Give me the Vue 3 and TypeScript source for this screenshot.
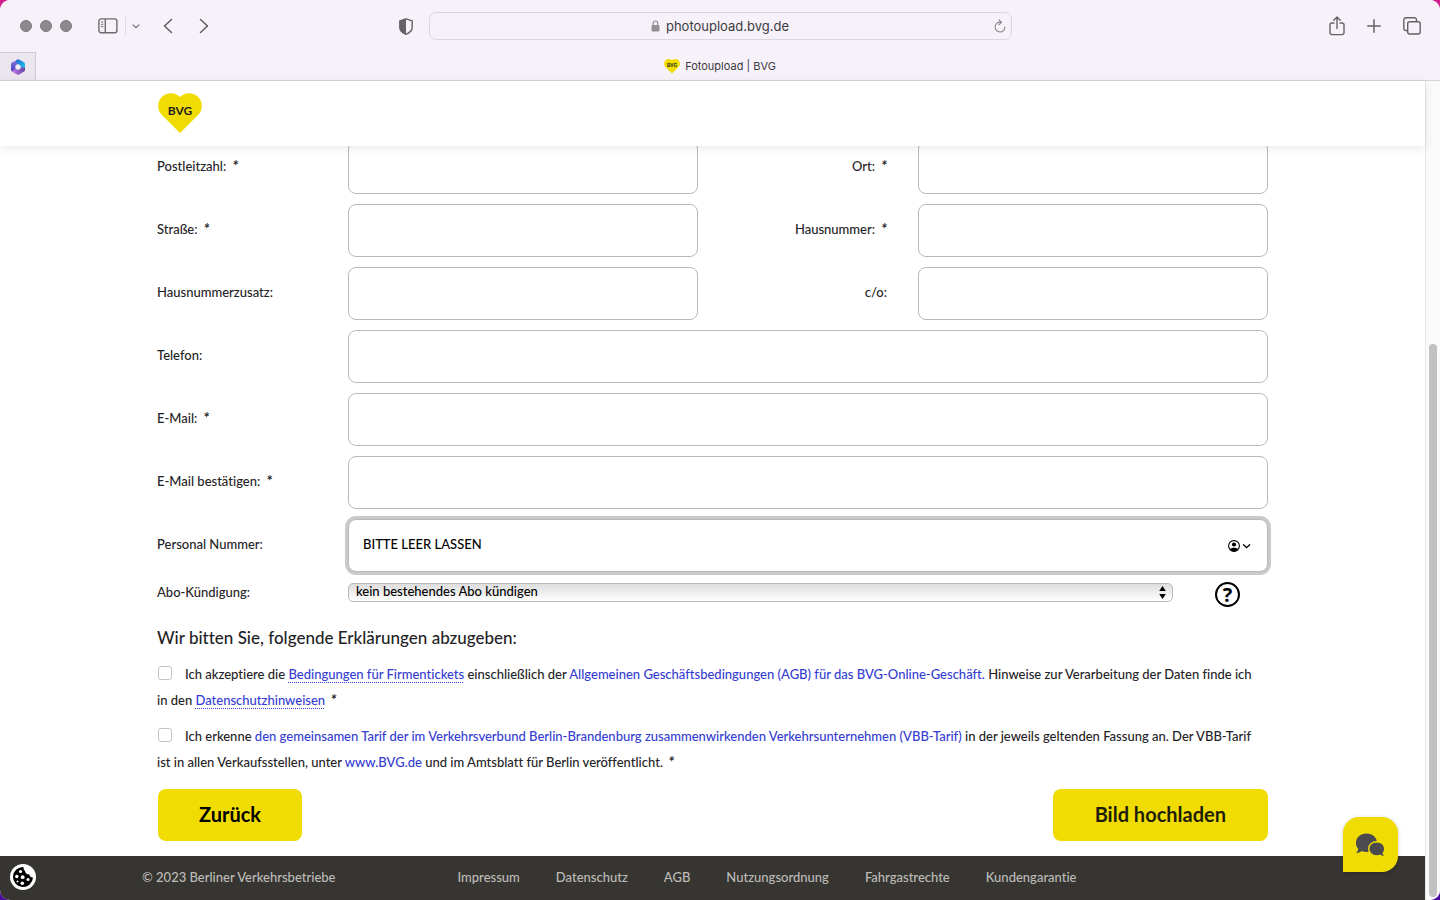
<script setup lang="ts">
import { ref } from 'vue'

interface Field {
  id: string
  label: string
  required: boolean
  wide: boolean
  side: boolean
}

const fields: Field[] = [
  { id: 'plz', label: 'Postleitzahl:', required: true, wide: false, side: false },
  { id: 'ort', label: 'Ort:', required: true, wide: false, side: true },
  { id: 'strasse', label: 'Straße:', required: true, wide: false, side: false },
  { id: 'hausnummer', label: 'Hausnummer:', required: true, wide: false, side: true },
  { id: 'zusatz', label: 'Hausnummerzusatz:', required: false, wide: false, side: false },
  { id: 'co', label: 'c/o:', required: false, wide: false, side: true },
  { id: 'telefon', label: 'Telefon:', required: false, wide: true, side: false },
  { id: 'email', label: 'E-Mail:', required: true, wide: true, side: false },
  { id: 'email2', label: 'E-Mail bestätigen:', required: true, wide: true, side: false },
]

const footerLinks: string[] = [
  'Impressum',
  'Datenschutz',
  'AGB',
  'Nutzungsordnung',
  'Fahrgastrechte',
  'Kundengarantie',
]

const personalNumber = ref('BITTE LEER LASSEN')
</script>

<template>
  <div class="window">
    <header class="chrome">
      <div class="toolbar">
        <div class="tools">
          <div class="lights"><i></i><i></i><i></i></div>
          <button class="tool sidebar" aria-label="Seitenleiste">
            <svg width="20" height="16" viewBox="0 0 20 16" fill="none" stroke="#6d696e" stroke-width="1.4">
              <rect x="0.9" y="0.9" width="18" height="13.8" rx="2.2" />
              <path d="M7.3 1v13.6" />
              <path d="M3 4h2.3M3 6.3h2.3M3 8.6h2.3" stroke-width="1" />
            </svg>
          </button>
          <span class="divider"></span>
          <button class="tool menu" aria-label="Tabgruppen">
            <svg width="8" height="5" viewBox="0 0 8 5" fill="none" stroke="#8b878c" stroke-width="1.4" stroke-linecap="round">
              <path d="M1 1l3 2.5L7 1" />
            </svg>
          </button>
          <button class="tool back" aria-label="Zurück">
            <svg width="10" height="16" viewBox="0 0 10 16" fill="none" stroke="#5f5b60" stroke-width="1.5" stroke-linecap="round" stroke-linejoin="round">
              <path d="M8.5 1.5L1.5 8l7 6.5" />
            </svg>
          </button>
          <button class="tool forward" aria-label="Vorwärts">
            <svg width="10" height="16" viewBox="0 0 10 16" fill="none" stroke="#5f5b60" stroke-width="1.5" stroke-linecap="round" stroke-linejoin="round">
              <path d="M1.5 1.5L8.5 8l-7 6.5" />
            </svg>
          </button>
          <button class="tool shield" aria-label="Datenschutzbericht">
            <svg width="14" height="17" viewBox="0 0 14 17">
              <path d="M7 .8L13.2 2.8V9.5C13.2 12.8 10 15 7 16.3C4 15 .8 12.8 .8 9.5V2.8Z" fill="none" stroke="#656166" stroke-width="1.4" stroke-linejoin="round" />
              <path d="M7 .8V16.3C4 15 .8 12.8 .8 9.5V2.8Z" fill="#656166" />
            </svg>
          </button>
        </div>
        <div class="address">
          <svg class="lock" width="9" height="12" viewBox="0 0 9 12">
            <rect x="0.5" y="5" width="8" height="6.5" rx="1" fill="#949096" />
            <path d="M2.2 5.5V3.3a2.3 2.3 0 0 1 4.600 0v2.2" fill="none" stroke="#949096" stroke-width="1.2" />
          </svg>
          <span>photoupload.bvg.de</span>
          <button class="tool reload" aria-label="Neu laden">
            <svg width="12" height="14" viewBox="0 0 12 14" fill="none" stroke="#858186" stroke-width="1.1" stroke-linecap="round" stroke-linejoin="round">
              <path d="M6.5 3.2A4.9 4.9 0 1 0 10.9 8" />
              <path d="M5 .8L7.6 3.3L5 5.7" />
            </svg>
          </button>
        </div>
        <div class="actions">
          <button class="tool" aria-label="Teilen">
            <svg width="16" height="20" viewBox="0 0 16 20" fill="none" stroke="#656166" stroke-width="1.4" stroke-linecap="round" stroke-linejoin="round">
              <path d="M5 7H2.8A1.8 1.8 0 0 0 1 8.8v8A1.8 1.8 0 0 0 2.8 18.6h10.4A1.8 1.8 0 0 0 15 16.8v-8A1.8 1.8 0 0 0 13.2 7H11" />
              <path d="M8 12.5V1.2M4.8 4.2L8 1.1l3.2 3.1" />
            </svg>
          </button>
          <button class="tool" aria-label="Neuer Tab">
            <svg width="14" height="14" viewBox="0 0 14 14" stroke="#656166" stroke-width="1.5" stroke-linecap="round">
              <path d="M7 .8v12.4M.8 7h12.4" />
            </svg>
          </button>
          <button class="tool" aria-label="Tabübersicht">
            <svg width="18" height="18" viewBox="0 0 18 18" fill="none" stroke="#656166" stroke-width="1.4">
              <rect x="4.7" y="4.7" width="12.5" height="12.3" rx="2" />
              <path d="M4.7 13.5H2.9A2 2 0 0 1 .8 11.5V2.9A2 2 0 0 1 2.9.8h8.6a2 2 0 0 1 2 2v1.9" />
            </svg>
          </button>
        </div>
      </div>
      <div class="tabs">
        <button class="pinned" aria-label="Microsoft 365">
          <svg width="16" height="16" viewBox="0 0 16 16">
            <defs>
              <linearGradient id="ga" x1="0" y1="0" x2="0" y2="1"><stop offset="0" stop-color="#8a7be6" /><stop offset="1" stop-color="#4440b8" /></linearGradient>
              <linearGradient id="gb" x1="0" y1="0" x2="1" y2="1"><stop offset="0" stop-color="#2464cf" /><stop offset="1" stop-color="#18cdf2" /></linearGradient>
              <linearGradient id="gc" x1="0" y1="0" x2="1" y2="0"><stop offset="0" stop-color="#c77ce8" /><stop offset="1" stop-color="#5b45a8" /></linearGradient>
            </defs>
            <path d="M8 .4L2 3.5Q1 4.2 1 5.5V10.5Q1 12 2.2 12.8L8 8Z" fill="url(#ga)" />
            <path d="M6 1.3L7.5.6Q8.5 0 9.5.7L14 3.3Q15 4 15 5.2V9.2L8 8Z" fill="url(#gb)" />
            <path d="M15 8.5V10.7Q15 12 14 12.6L9 15.4Q8 15.9 7 15.4L1.8 12.5L8 8Z" fill="url(#gc)" />
            <circle cx="8" cy="8" r="2.7" fill="#f1ebf5" />
          </svg>
        </button>
        <div class="tab">
          <svg width="16" height="15" viewBox="0 0 44 41">
            <path d="M22 40L3.7 21.7A12.7 12.7 0 1 1 22 4.050A12.7 12.7 0 1 1 40.3 21.7Z" fill="#f0dc00" />
            <text x="22" y="21" text-anchor="middle" class="mini">BVG</text>
          </svg>
          <span>Fotoupload | BVG</span>
        </div>
      </div>
    </header>

    <div class="viewport">
      <div class="page">
        <div class="brandbar">
          <a href="#" aria-label="BVG Startseite">
            <svg width="44" height="41" viewBox="0 0 44 41">
              <path d="M22 40L3.7 21.7A12.7 12.7 0 1 1 22 4.050A12.7 12.7 0 1 1 40.3 21.7Z" fill="#f0dc00" />
              <text x="22" y="22" text-anchor="middle" class="bvg">BVG</text>
            </svg>
          </a>
        </div>

        <form class="form" @submit.prevent>
          <div class="grid">
            <template v-for="f in fields" :key="f.id">
              <label :for="f.id" :class="{ side: f.side }">{{ f.label }}<em v-if="f.required">*</em></label>
              <input :id="f.id" type="text" class="box" :class="{ wide: f.wide }" />
            </template>
            <label for="personal">Personal Nummer:</label>
            <div class="personal wide">
              <input id="personal" v-model="personalNumber" type="text" class="box active" />
              <svg class="autofill" width="24" height="12" viewBox="0 0 24 12">
                <circle cx="6" cy="6" r="5.4" fill="#fff" stroke="#000" stroke-width="1.1" />
                <circle cx="6" cy="4.5" r="2.1" fill="#000" />
                <path d="M2 9.3C3 7.3 9 7.3 10 9.3C8 12 4 12 2 9.3Z" fill="#000" />
                <path d="M15.5 4.7L18.6 7.7L21.7 4.7" fill="none" stroke="#000" stroke-width="1.3" stroke-linecap="round" />
              </svg>
            </div>
            <label for="abo" class="abo">Abo-Kündigung:</label>
            <div class="wide cancel">
              <div class="selectwrap">
                <select id="abo">
                  <option>kein bestehendes Abo kündigen</option>
                </select>
                <svg class="arrows" width="7" height="13" viewBox="0 0 7 13">
                  <path d="M3.5 0L6.8 5H.2ZM3.5 13L6.8 8H.2Z" fill="#000" />
                </svg>
              </div>
              <button type="button" class="help" aria-label="Hilfe">?</button>
            </div>
          </div>

          <h2>Wir bitten Sie, folgende Erklärungen abzugeben:</h2>

          <p>
            <input id="agb" type="checkbox" /><label for="agb">Ich akzeptiere die</label>{{ ' ' }}
            <a href="#" class="dotted">Bedingungen für Firmentickets</a> einschließlich der
            <a href="#">Allgemeinen Geschäftsbedingungen (AGB) für das BVG-Online-Geschäft.</a>
            Hinweise zur Verarbeitung der Daten finde ich in den
            <a href="#" class="dotted">Datenschutzhinweisen</a> <em>*</em>
          </p>
          <p>
            <input id="vbb" type="checkbox" /><label for="vbb">Ich erkenne</label>{{ ' ' }}
            <a href="#">den gemeinsamen Tarif der im Verkehrsverbund Berlin-Brandenburg zusammenwirkenden Verkehrsunternehmen (VBB-Tarif)</a>
            in der jeweils geltenden Fassung an. Der VBB-Tarif ist in allen Verkaufsstellen, unter
            <a href="#">www.BVG.de</a> und im Amtsblatt für Berlin veröffentlicht. <em>*</em>
          </p>

          <div class="buttons">
            <button type="button" class="cta first">Zurück</button>
            <button type="submit" class="cta">Bild hochladen</button>
          </div>
        </form>

        <footer class="footer">
          <span class="copy">© 2023 Berliner Verkehrsbetriebe</span>
          <nav>
            <a v-for="l in footerLinks" :key="l" href="#">{{ l }}</a>
          </nav>
        </footer>

        <button class="cookie" aria-label="Cookie-Einstellungen">
          <svg width="26" height="26" viewBox="0 0 26 26">
            <circle cx="13" cy="13" r="13" fill="#fff" />
            <path d="M13.5 3A10 10 0 1 0 23 13.5A3.3 3.3 0 0 1 19.3 10.3A4 4 0 0 1 15 7.2A4.2 4.2 0 0 1 13.5 3Z" fill="#000" />
            <g fill="#fff">
              <circle cx="10.5" cy="7.5" r="1.6" />
              <circle cx="6.8" cy="12.5" r="1.7" />
              <circle cx="12.7" cy="13.2" r="1.9" />
              <circle cx="18" cy="15.5" r="1.5" />
              <circle cx="12.3" cy="19.3" r="1.8" />
              <circle cx="7.5" cy="17.5" r="1" />
            </g>
          </svg>
        </button>
        <button class="chat" aria-label="Chat">
          <svg width="30" height="24" viewBox="0 0 30 24">
            <path d="M11.5.5C17.5.5 22 4.5 22 9.8S17.5 19 11.5 19C9.8 19 8.2 18.7 6.8 18.1C5.2 19.4 3 20.1 1 20C2.3 18.7 3 17.3 3.1 15.7C1.5 14.1 1 12 1 9.8C1 4.5 5.5.5 11.5.5Z" fill="#4b4b4f" />
            <path d="M21.7 9.5C17.5 9.5 14.5 12.3 14.5 15.8S17.5 22.2 21.7 22.2C23 22.2 24.1 22 25.1 21.5C26.3 22.5 27.6 22.9 29 22.8C28.2 21.9 27.6 20.9 27.5 19.9C28.5 18.8 29 17.3 29 15.8C29 12.3 26 9.5 21.7 9.5Z" fill="#4b4b4f" stroke="#f0dc00" stroke-width="3" paint-order="stroke" />
          </svg>
        </button>
      </div>
      <div class="scrollbar"><div class="thumb"></div></div>
    </div>
  </div>
</template>

<style>
body {
  margin: 0;
  background: linear-gradient(#cf1d8c, #4a0aa0);
}
</style>

<style scoped>
* {
  box-sizing: border-box;
}
button {
  padding: 0;
  border: 0;
  background: none;
  font: inherit;
  color: inherit;
}
svg {
  display: block;
}
.window {
  min-height: 100vh;
  display: flex;
  flex-direction: column;
  border-radius: 10px;
  overflow: hidden;
  background: #fff;
}
.chrome {
  background: #f7f2f9;
  border-bottom: 1px solid #d5d1d6;
  font-family: Inter, "Liberation Sans", sans-serif;
  color: #3d3a3e;
}
.toolbar {
  height: 52px;
  display: grid;
  grid-template-columns: 1fr 583px 1fr;
  align-items: center;
}
.tools {
  display: flex;
  align-items: center;
  padding-left: 20px;
}
.lights {
  display: flex;
  gap: 8px;
}
.lights i {
  width: 12px;
  height: 12px;
  border-radius: 50%;
  background: #8c888d;
  border: 1px solid #7d797e;
}
.sidebar {
  margin-left: 26px;
}
.divider {
  width: 1px;
  height: 18px;
  margin-left: 7px;
  background: #e0dbe2;
}
.menu {
  margin-left: 6px;
}
.back {
  margin-left: 23px;
}
.forward {
  margin-left: 26px;
}
.shield {
  margin-left: auto;
  margin-right: 16px;
}
.address {
  position: relative;
  height: 28px;
  border: 1px solid #dcd7de;
  border-radius: 7px;
  display: flex;
  align-items: center;
  justify-content: center;
  gap: 6px;
  font-size: 13px;
}
.reload {
  position: absolute;
  right: 5px;
  top: 6px;
}
.actions {
  display: flex;
  align-items: center;
  justify-content: flex-end;
  gap: 22px;
  padding-right: 19px;
}
.tabs {
  height: 28px;
  display: flex;
}
.pinned {
  width: 36px;
  display: flex;
  align-items: center;
  justify-content: center;
  background: #ece6ee;
  border: solid #d0cbd2;
  border-width: 1px 1px 0 0;
}
.tab {
  flex: 1;
  margin-right: 36px;
  display: flex;
  align-items: center;
  justify-content: center;
  gap: 5px;
  font-size: 11px;
}
.mini {
  font: bold 13px "Liberation Sans", sans-serif;
  fill: #222;
}
.bvg {
  font: 700 12px Lato, "Open Sans", sans-serif;
  fill: #222;
}
.viewport {
  flex: 1;
  display: flex;
}
.page {
  position: relative;
  flex: 1;
  display: flex;
  flex-direction: column;
  font: 500 13px/26px Lato, "Open Sans", sans-serif;
  font-variant-ligatures: none;
  color: #1f2326;
}
.brandbar {
  position: relative;
  z-index: 1;
  height: 65px;
  padding: 12px 158px 0;
  background: #fff;
  box-shadow: 0 2px 10px rgba(0, 0, 0, 0.09);
}
.brandbar a {
  display: inline-block;
}
.form {
  flex: 1;
  margin-top: -5px;
  padding: 0 157px 15px;
}
.grid {
  display: grid;
  grid-template-columns: 191px 1fr 220px 1fr;
  row-gap: 10px;
  align-items: center;
}
.grid label {
  padding-bottom: 4px;
}
.side {
  text-align: right;
  padding-right: 31px;
}
em {
  margin-left: 6px;
  font-size: 15px;
  font-weight: 700;
  line-height: 20px;
}
p em {
  margin-left: 2px;
}
.box {
  width: 100%;
  height: 53px;
  padding: 0 14px 4px;
  border: 1px solid #b9b9b4;
  border-radius: 8px;
  background: #fff;
  font: inherit;
  color: #000;
  outline: none;
}
.wide {
  grid-column: 2 / 5;
}
.personal {
  position: relative;
}
.active {
  display: block;
  box-shadow: 0 0 0 3px #cbcbcd;
}
.autofill {
  position: absolute;
  right: 16px;
  top: 21px;
}
.abo {
  align-self: start;
  line-height: 20px;
}
.cancel {
  display: flex;
  align-items: flex-start;
  justify-content: space-between;
  padding-right: 28px;
}
.selectwrap {
  position: relative;
  flex: 1;
  margin-right: 42px;
  padding-top: 1px;
}
select {
  display: block;
  width: 100%;
  height: 19px;
  padding: 0 7px 2px;
  appearance: none;
  border: 1px solid #b9b9b4;
  border-radius: 5px;
  background: linear-gradient(#dedede, #fff);
  font: inherit;
  line-height: 15px;
  color: #000;
}
.arrows {
  position: absolute;
  right: 7px;
  top: 4px;
}
.help {
  width: 25px;
  height: 25px;
  margin-bottom: 1px;
  border: 2px solid #000;
  border-radius: 50%;
  font: bold 20px/20px "Open Sans", sans-serif;
  color: #000;
}
h2 {
  margin: 18px 0 11px;
  font-size: 17px;
  line-height: 24px;
  font-weight: 500;
}
p {
  margin: 0 0 10px;
  padding-right: 8px;
}
a {
  color: #343cd2;
  text-decoration: none;
}
.dotted {
  text-decoration: underline dotted 1px;
  text-underline-offset: 3px;
}
p input {
  appearance: none;
  width: 14px;
  height: 14px;
  margin: 0 13px 0 1px;
  border: 1px solid #c4c4c4;
  border-radius: 3px;
  background: #fff;
  vertical-align: -1px;
}
.buttons {
  display: flex;
  justify-content: space-between;
  margin-top: 14px;
  padding-left: 1px;
}
.cta {
  height: 52px;
  padding: 0 42px 2px;
  border-radius: 8px;
  background: #f0dc00;
  font-size: 20px;
  font-weight: 700;
  color: #1f1e0a;
}
.first {
  padding: 0 41px 2px;
  color: #000;
}
.footer {
  height: 44px;
  display: flex;
  align-items: center;
  gap: 122px;
  padding: 0 142px 2px;
  background: #373531;
  color: #bdbcb8;
}
.footer nav {
  display: flex;
  gap: 36px;
}
.footer a {
  color: inherit;
}
.cookie {
  position: absolute;
  left: 10px;
  bottom: 10px;
}
.chat {
  position: absolute;
  right: 27px;
  bottom: 28px;
  width: 55px;
  height: 55px;
  padding-left: 12px;
  border-radius: 16px 16px 16px 0;
  background: #f0dc00;
  box-shadow: 0 1px 4px rgba(0, 0, 0, 0.2);
}
.scrollbar {
  width: 15px;
  display: flex;
  flex-direction: column;
  justify-content: flex-end;
  padding: 3px;
  background: #fafafa;
  border-left: 1px solid #e6e6e6;
}
.thumb {
  width: 8px;
  height: 68%;
  border-radius: 4px;
  background: #c1c1c1;
}
</style>
